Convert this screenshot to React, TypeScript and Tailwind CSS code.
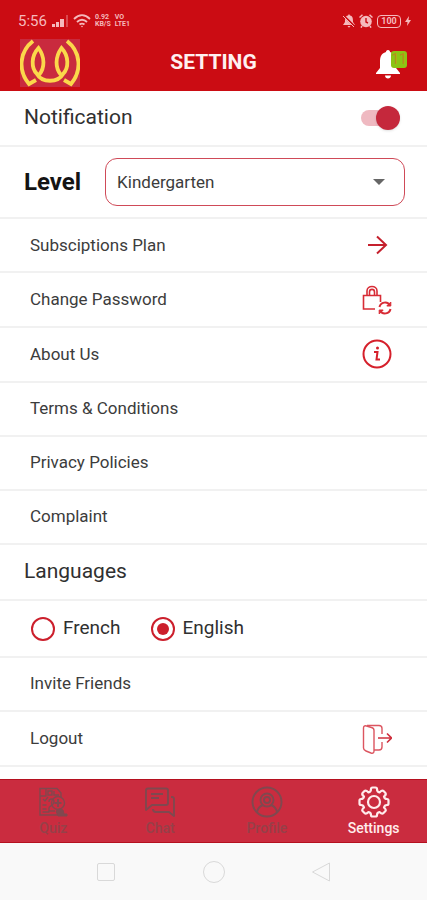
import { useState } from "react";
import type { ReactNode } from "react";

const rowClass =
  "flex min-h-[54px] flex-1 items-center justify-between border-b-2 border-[#f1f1f1] pl-[30px] pr-[35px]";

function Logo() {
  return (
    <svg viewBox="0 0 60 48" className="h-12 w-[60px]" aria-label="Logo" role="img">
      <rect width="60" height="48" fill="#c92a3e" />
      <g fill="none" stroke="#fbd84b" strokeWidth="3.800">
        <path d="M13 2C-1 13-2 32 9 45l7-4" />
        <path d="M47 2c14 11 15 30 4 43l-7-4" />
        <path d="M19 36C25 29 25 18 18.500 9C11 17 11 29 17 35C22 44 38 44 43 35C49 29 49 17 41.500 9C35 18 35 29 41 36" />
      </g>
    </svg>
  );
}

function StatusBar() {
  return (
    <div className="flex h-[34px] items-center justify-between pt-2 pl-[18px] pr-4 text-[#f5b9bc]">
      <div className="flex items-center gap-1">
        <span className="text-[15px] leading-4">5:56</span>
        <svg viewBox="0 0 18 12" className="h-3 w-[18px]" fill="currentColor" aria-hidden="true">
          <path d="M1 9h3v3H1zM5 7h3v5H5zM9 4h4v8H9z" />
          <path d="M15 0h2v12h-2z" opacity=".35" />
        </svg>
        <svg viewBox="0 0 18 14" className="h-3.5 w-[18px]" fill="none" stroke="currentColor" strokeWidth="1.8" aria-hidden="true">
          <path d="M1 5c5-5 11-5 16 0M4 8c3-3 7-3 10 0M6.500 10.500c2-1.500 3-1.500 5 0" />
          <circle cx="9" cy="12.500" r=".8" fill="currentColor" stroke="none" />
        </svg>
        <span className="text-[7px] leading-[7px] font-bold">0.92<br />KB/S</span>
        <span className="text-[7px] leading-[7px] font-bold">VO<br />LTE1</span>
      </div>
      <div className="flex items-center gap-1">
        <svg viewBox="0 0 12 14" className="h-3.5 w-3" aria-hidden="true">
          <path d="M6 0l1 1.500C10 2 10 5 10 8l2 3H0l2-3c0-3 0-6 3-6.500zM4.500 12h3L6 13.800z" fill="currentColor" />
          <path d="M0 1l12 12" stroke="#cb0c13" strokeWidth="2" />
          <path d="M0 2l11 11" stroke="currentColor" />
        </svg>
        <svg viewBox="0 0 14 14" className="size-3.5" aria-hidden="true">
          <circle cx="7" cy="7.500" r="5.800" fill="currentColor" />
          <path d="M.5 3.500L3.500.7M13.500 3.500L10.500.7M3 12l-1 1.700M11 12l1 1.700" stroke="currentColor" strokeWidth="1.500" />
          <path d="M7 4v4l2 1" fill="none" stroke="#cb0c13" strokeWidth="1.400" />
        </svg>
        <span className="flex h-[13px] w-6 items-center justify-center rounded-[4px] border border-current text-[9px] leading-none font-bold">
          100
        </span>
        <svg viewBox="0 0 6 10" className="h-2.5 w-1.5" fill="currentColor" aria-hidden="true">
          <path d="M4 0L0 6h2.500L2 10l4-6H3.500z" />
        </svg>
      </div>
    </div>
  );
}

function LockIcon() {
  return (
    <svg viewBox="0 0 30 30" className="size-[30px]" fill="none" stroke="#d82c36" strokeWidth="1.600" aria-hidden="true">
      <path d="M13 24H1.500V10.500h17V17M5 10V6c0-6 10-6 10 0v4M7.500 10V7c0-3.500 5-3.500 5 0v3" />
      <path d="M17.500 22c1-5 8-6 10-2M28.500 24c-1 5-8 6-10 2" strokeWidth="2" />
      <path d="M28.800 17v4h-4zM17.200 29v-4h4z" fill="#d82c36" strokeWidth="1" />
    </svg>
  );
}

function InfoIcon() {
  return (
    <svg viewBox="0 0 30 30" className="size-[30px]" fill="none" stroke="#d5202b" strokeWidth="2" aria-hidden="true">
      <circle cx="15" cy="15" r="13.500" />
      <path d="M12 13h3.500l-1 7.500h3.500" />
      <circle cx="15.500" cy="9" r="1.500" fill="#d5202b" stroke="none" />
    </svg>
  );
}

function ArrowIcon() {
  return (
    <svg viewBox="0 0 30 20" className="h-5 w-[30px]" fill="none" stroke="#c5202d" strokeWidth="2" aria-hidden="true">
      <path d="M6 10h18M15 1.500L24 10l-9 8.500" />
    </svg>
  );
}

function LogoutIcon() {
  return (
    <svg viewBox="0 0 30 30" className="size-[30px]" fill="none" stroke="#dc5560" strokeWidth="1.400" strokeLinejoin="round" aria-hidden="true">
      <path d="M1.500 4c0-2 1-2.500 3-2l5 1.500c2 .5 2.500 1.500 2.500 3V27c0 2-1 2.500-3 2l-5-2c-2-.8-2.500-1.500-2.500-3z" />
      <path d="M5 1.500h12c2 0 3 1 3 3V10M12 26h5c2 0 3-1 3-3v-5" />
      <path d="M16 14h13M25 9.500l4.500 4.500-4.500 4.500" stroke="#cf303e" strokeWidth="1.600" />
    </svg>
  );
}

function QuizIcon() {
  return (
    <svg viewBox="0 0 30 30" className="size-[30px]" fill="none" stroke="currentColor" strokeWidth="1.400" aria-hidden="true">
      <path d="M2 9V1.500h17L23 6v4M2 9h6M8 1.500v8M2 9v19h19M10 4h4v4h-4zM16 4v4h5" />
      <path d="M5 12l2 2 3-4M4.500 18h4M4.500 22h4M4.500 25h7M11 15c0-4 5-4 5 0s-5 3-5 6v3h6" />
      <circle cx="20" cy="16" r="6.500" />
      <path d="M20 12v8M16.500 16h7" strokeWidth="2" />
      <path d="M18 24l3-2 4 1 1 4h3v2h-9z" fill="currentColor" strokeWidth="1" />
    </svg>
  );
}

function ChatIcon() {
  return (
    <svg viewBox="0 0 30 30" className="size-[30px]" fill="none" stroke="currentColor" strokeWidth="1.900" strokeLinejoin="round" aria-hidden="true">
      <path d="M3 1.500h18c1.500 0 2 .5 2 2V16c0 1.500-.5 2-2 2H7l-6 5V3.500c0-1.500.5-2 2-2z" />
      <path d="M6 7h12M6 11h8M26 10h1c1.500 0 2 .5 2 2v17l-5-4H11c-2 0-3-1-3-3" />
    </svg>
  );
}

function ProfileIcon() {
  return (
    <svg viewBox="0 0 32 32" className="size-8" fill="none" stroke="currentColor" strokeWidth="1.900" aria-hidden="true">
      <circle cx="16" cy="16" r="14.500" />
      <circle cx="16" cy="14" r="6.500" />
      <circle cx="16" cy="14" r="3" />
      <path d="M6 26c1-4 3-6 6-7M26 26c-1-4-3-6-6-7" />
    </svg>
  );
}

function GearIcon() {
  return (
    <svg viewBox="0 0 32 32" className="size-8" fill="none" stroke="currentColor" strokeWidth="2.200" strokeLinejoin="round" aria-hidden="true">
      <path d="M13 3Q13 1.500 14.500 1.500H17.500Q19 1.500 19 3Q19 6 21.500 6.500Q24 4 25.500 5L27.500 7Q28.500 8.500 26 10.500Q26.500 13 29 13Q30.500 13 30.500 14.500V17.500Q30.500 19 29 19Q26.500 19 26 21.500Q28.500 24 27.500 25L25.500 27Q24 28.500 21.500 26Q19 26.500 19 29Q19 30.500 17.500 30.500H14.500Q13 30.500 13 29Q13 26.500 10.500 26Q8 28.500 6.500 27L4.500 25Q3.500 24 6 21.500Q5.500 19 3 19Q1.500 19 1.500 17.500V14.500Q1.500 13 3 13Q5.500 13 6 10.500Q3.500 8.500 4.500 7L6.500 5Q8 4 10.500 6.500Q13 6 13 3z" />
      <circle cx="16" cy="16" r="6" />
    </svg>
  );
}

function MenuRow({ label, icon }: { label: string; icon?: ReactNode }) {
  return (
    <button type="button" className={rowClass + " text-left text-[17px] text-[#3c3c3c]"}>
      <span>{label}</span>
      {icon}
    </button>
  );
}

function Tab({ label, icon, active }: { label: string; icon: ReactNode; active?: boolean }) {
  return (
    <button
      type="button"
      aria-current={active ? "page" : undefined}
      className={
        "flex flex-1 flex-col items-center justify-between text-sm leading-4 font-medium " +
        (active ? "text-[#ffecec]" : "text-[#964049]")
      }
    >
      <span className={"flex h-8 items-center " + (active ? "" : "text-[#80484f]")}>{icon}</span>
      <span>{label}</span>
    </button>
  );
}

export default function App() {
  const [enabled, setEnabled] = useState(true);
  const [language, setLanguage] = useState("English");

  return (
    <div className="flex min-h-screen flex-col bg-white font-[Roboto,sans-serif] text-black">
      <header className="bg-[#cb0c13]">
        <StatusBar />
        <div className="grid h-[57px] grid-cols-[1fr_auto_1fr] items-center pr-5 pl-5">
          <Logo />
          <h1 className="text-[21px] font-bold text-[#fff0f0]">SETTING</h1>
          <button type="button" aria-label="Notifications" className="relative h-8 w-[31px] justify-self-end">
            <svg viewBox="0 0 24 30" className="mt-0.5 h-[30px] w-6" fill="#fff" aria-hidden="true">
              <path d="M12 1c1.500 0 2 1 2 2c5 1.500 6 5 6 10v6l4 5v1H0v-1l4-5v-6c0-5 1-8.500 6-10c0-1 .5-2 2-2zM9 26.500h6c0 4-6 4-6 0z" />
            </svg>
            <span className="absolute top-1 right-0 flex h-[17px] w-4 items-center justify-center rounded-[3px] bg-[#8cc414] text-sm leading-none text-[#bb8c1c]">
              11
            </span>
          </button>
        </div>
      </header>

      <main className="flex flex-1 flex-col pb-3">
        <div className="flex min-h-[54px] flex-1 items-center justify-between border-b-2 border-[#f1f1f1] pr-[27px] pl-6">
          <label htmlFor="notify" className="text-[21px] text-[#303030]">Notification</label>
          <input
            id="notify"
            type="checkbox"
            role="switch"
            checked={enabled}
            onChange={(e) => setEnabled(e.target.checked)}
            className="relative flex h-6 w-[39px] appearance-none items-center before:absolute before:inset-x-0 before:inset-y-1 before:rounded-full before:bg-[#efb9c1] after:relative after:block after:size-6 after:rounded-full after:bg-[#c5283c] after:shadow checked:justify-end"
          />
        </div>

        <div className="flex h-[72px] items-center gap-6 border-b-2 border-[#f1f1f1] pr-[22px] pl-6">
          <label htmlFor="level" className="text-2xl font-bold text-[#141414]">Level</label>
          <div className="relative flex-1">
            <select
              id="level"
              className="h-12 w-full appearance-none rounded-xl border border-[#cf4a58] bg-white pl-[11px] text-[17px] text-[#3c3c3c]"
            >
              <option>Kindergarten</option>
            </select>
            <svg viewBox="0 0 12 6" className="pointer-events-none absolute top-[21px] right-5 h-1.5 w-3" fill="#666" aria-hidden="true">
              <path d="M0 0h12L6 6z" />
            </svg>
          </div>
        </div>

        <MenuRow label="Subsciptions Plan" icon={<ArrowIcon />} />
        <MenuRow label="Change Password" icon={<LockIcon />} />
        <MenuRow label="About Us" icon={<InfoIcon />} />
        <MenuRow label="Terms & Conditions" />
        <MenuRow label="Privacy Policies" />
        <MenuRow label="Complaint" />

        <h2 className="flex min-h-[54px] flex-1 items-center border-b-2 border-[#f1f1f1] pl-6 text-[21px] text-[#303030]">
          Languages
        </h2>
        <div role="radiogroup" aria-label="Languages" className="flex h-[57px] items-center gap-[30px] border-b-2 border-[#f1f1f1] pl-[31px]">
          {["French", "English"].map((name) => (
            <label key={name} className="flex items-center gap-2 text-[19px] text-[#303030]">
              <input
                type="radio"
                name="language"
                value={name}
                checked={language === name}
                onChange={() => setLanguage(name)}
                className="flex size-6 appearance-none items-center justify-center rounded-full border-2 border-[#cc1f2c] checked:before:block checked:before:size-3 checked:before:rounded-full checked:before:bg-[#cc1f2c]"
              />
              {name}
            </label>
          ))}
        </div>

        <MenuRow label="Invite Friends" />
        <MenuRow label="Logout" icon={<LogoutIcon />} />
      </main>

      <nav className="flex h-16 border-y border-[#b5101f] bg-[#ca2c3f] pt-1.5 pb-1.5">
        <Tab label="Quiz" icon={<QuizIcon />} />
        <Tab label="Chat" icon={<ChatIcon />} />
        <Tab label="Profile" icon={<ProfileIcon />} />
        <Tab label="Settings" icon={<GearIcon />} active />
      </nav>

      <div className="flex h-[57px] items-center justify-center gap-[86px] bg-[#f9f9f9] text-[#d9d9d9]">
        <button type="button" aria-label="Recent apps" className="flex w-[21px] justify-center">
          <span className="size-[18px] rounded-xs border border-current" />
        </button>
        <button type="button" aria-label="Home" className="size-[22px] rounded-full border border-current" />
        <button type="button" aria-label="Back" className="w-[21px]">
          <svg viewBox="0 0 21 22" className="h-[22px] w-[21px]" fill="none" stroke="currentColor" strokeLinejoin="round" aria-hidden="true">
            <path d="M18.500 2v18L1.500 11z" />
          </svg>
        </button>
      </div>
    </div>
  );
}
